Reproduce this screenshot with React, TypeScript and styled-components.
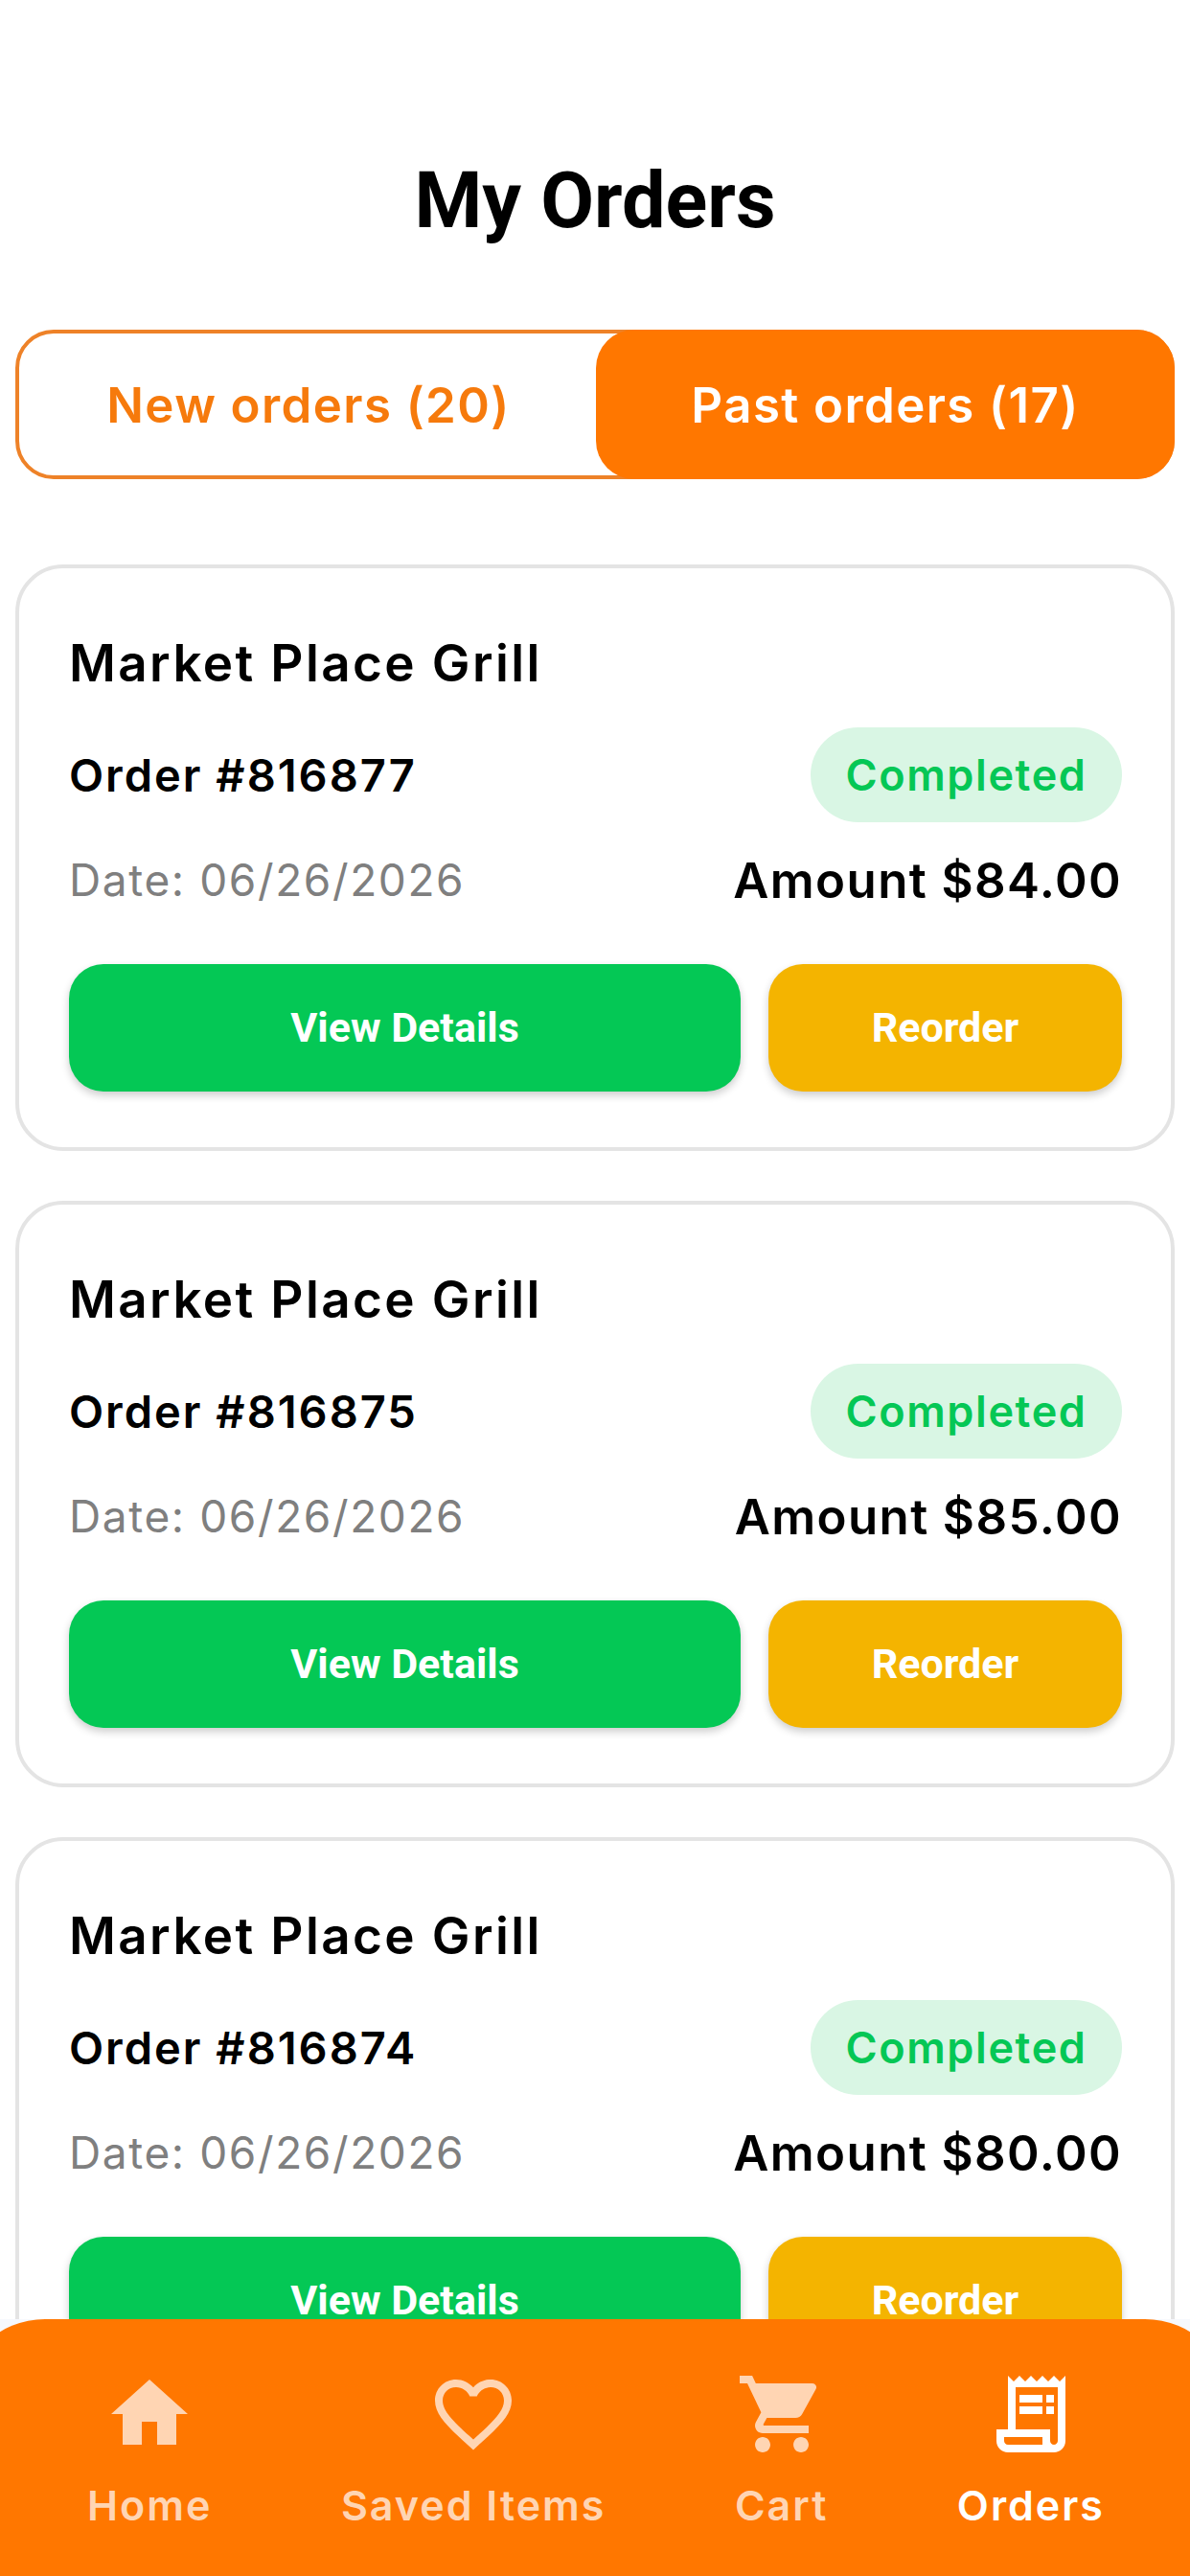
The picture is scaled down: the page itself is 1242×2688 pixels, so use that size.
import React from "react";
import styled, { createGlobalStyle } from "styled-components";
import { MdHome, MdFavoriteBorder, MdShoppingCart, MdOutlineReceiptLong } from "react-icons/md";

const orders = [
  { id: "816877", date: "06/26/2026", amount: "84.00" },
  { id: "816875", date: "06/26/2026", amount: "85.00" },
  { id: "816874", date: "06/26/2026", amount: "80.00" },
];

const navItems = [
  { label: "Home", icon: MdHome },
  { label: "Saved Items", icon: MdFavoriteBorder },
  { label: "Cart", icon: MdShoppingCart },
  { label: "Orders", icon: MdOutlineReceiptLong, active: true },
];

const GlobalStyle = createGlobalStyle`
  * {
    box-sizing: border-box;
  }

  html,
  body {
    margin: 0;
    background: #fff;
  }
`;

const Screen = styled.div`
  position: relative;
  width: 1242px;
  height: 2688px;
  padding: 160px 16px 0;
  overflow: hidden;
  background: #fff;
  font-family: "Inter", "Liberation Sans", sans-serif;
`;

const Title = styled.h1`
  margin: 0 0 84px;
  font-family: "Roboto", sans-serif;
  font-size: 81px;
  line-height: 100px;
  font-weight: 700;
  text-align: center;
  color: #000;
`;

const Segment = styled.div`
  display: flex;
  height: 156px;
  margin-bottom: 89px;
  border: 4px solid #ee8228;
  border-radius: 40px;
`;

const Tab = styled.div<{ $active?: boolean }>`
  display: flex;
  align-items: center;
  justify-content: center;
  flex: 1;
  margin: ${(p) => (p.$active ? "-4px -4px -4px -2px" : "0")};
  border-radius: 40px;
  font-size: 51px;
  font-weight: 600;
  letter-spacing: 1.4px;
  background: ${(p) => (p.$active ? "#ff7700" : "transparent")};
  color: ${(p) => (p.$active ? "#fff" : "#f67a0c")};
`;

const OrderList = styled.div`
  display: flex;
  flex-direction: column;
  gap: 52px;
`;

const Card = styled.div`
  padding: 64px 51px 58px 52px;
  border: 4px solid #e4e4e4;
  border-radius: 50px;
  background: #fff;
`;

const Restaurant = styled.div`
  margin-bottom: 32px;
  font-size: 53px;
  line-height: 70px;
  font-weight: 600;
  letter-spacing: 2.4px;
  color: #000;
`;

const Row = styled.div<{ $height: number; $gap: number }>`
  display: flex;
  align-items: center;
  justify-content: space-between;
  height: ${(p) => p.$height}px;
  margin-bottom: ${(p) => p.$gap}px;
`;

const OrderNo = styled.div`
  font-size: 47px;
  font-weight: 600;
  letter-spacing: 2px;
  color: #000;
`;

const Badge = styled.div`
  display: flex;
  align-items: center;
  justify-content: center;
  width: 325px;
  height: 99px;
  border-radius: 50px;
  background: #d9f6e4;
  font-size: 45px;
  font-weight: 600;
  letter-spacing: 1.6px;
  color: #05c755;
`;

const DateText = styled.div`
  font-size: 46px;
  font-weight: 400;
  letter-spacing: 1.6px;
  color: #7f7f7f;
`;

const Amount = styled.div`
  font-size: 51px;
  font-weight: 600;
  letter-spacing: 1.4px;
  color: #000;
`;

const Actions = styled.div`
  display: flex;
  gap: 29px;
`;

const ActionButton = styled.button<{ $color: string; $wide?: boolean }>`
  flex: ${(p) => (p.$wide ? "0 0 701px" : "1")};
  height: 133px;
  padding: 0 0 2px;
  border: none;
  border-radius: 36px;
  background: ${(p) => p.$color};
  box-shadow: 0 4px 8px rgba(0, 0, 0, 0.2);
  font-family: "Roboto", sans-serif;
  font-size: 43px;
  font-weight: 700;
  color: #fff;
`;

const NavShell = styled.div`
  position: absolute;
  left: 0;
  right: 0;
  bottom: 0;
  height: 268px;
  overflow: hidden;
  background: #f6f8fd;
`;

const BottomNav = styled.nav`
  display: flex;
  justify-content: space-between;
  height: 100%;
  margin: 0 -43px;
  padding: 51px 132px 0 134px;
  border-radius: 90px 90px 0 0;
  background: #ff7700;
`;

const NavItem = styled.div<{ $active?: boolean }>`
  display: flex;
  flex-direction: column;
  align-items: center;
  gap: 17px;
  color: ${(p) => (p.$active ? "#fff" : "#ffd5b3")};
`;

const NavLabel = styled.span`
  font-size: 43px;
  line-height: 60px;
  font-weight: 600;
  letter-spacing: 2px;
  white-space: nowrap;
`;

export default function App() {
  return (
    <>
      <GlobalStyle />
      <Screen>
        <Title>My Orders</Title>
        <Segment>
          <Tab>New orders (20)</Tab>
          <Tab $active>Past orders (17)</Tab>
        </Segment>
        <OrderList>
          {orders.map((order) => (
            <Card key={order.id}>
              <Restaurant>Market Place Grill</Restaurant>
              <Row $height={99} $gap={30}>
                <OrderNo>Order #{order.id}</OrderNo>
                <Badge>Completed</Badge>
              </Row>
              <Row $height={60} $gap={58}>
                <DateText>Date: {order.date}</DateText>
                <Amount>Amount ${order.amount}</Amount>
              </Row>
              <Actions>
                <ActionButton $color="#04c855" $wide>View Details</ActionButton>
                <ActionButton $color="#f4b400">Reorder</ActionButton>
              </Actions>
            </Card>
          ))}
        </OrderList>
        <NavShell>
          <BottomNav>
            {navItems.map((item) => (
              <NavItem key={item.label} $active={item.active}>
                <item.icon size={96} />
                <NavLabel>{item.label}</NavLabel>
              </NavItem>
            ))}
          </BottomNav>
        </NavShell>
      </Screen>
    </>
  );
}
